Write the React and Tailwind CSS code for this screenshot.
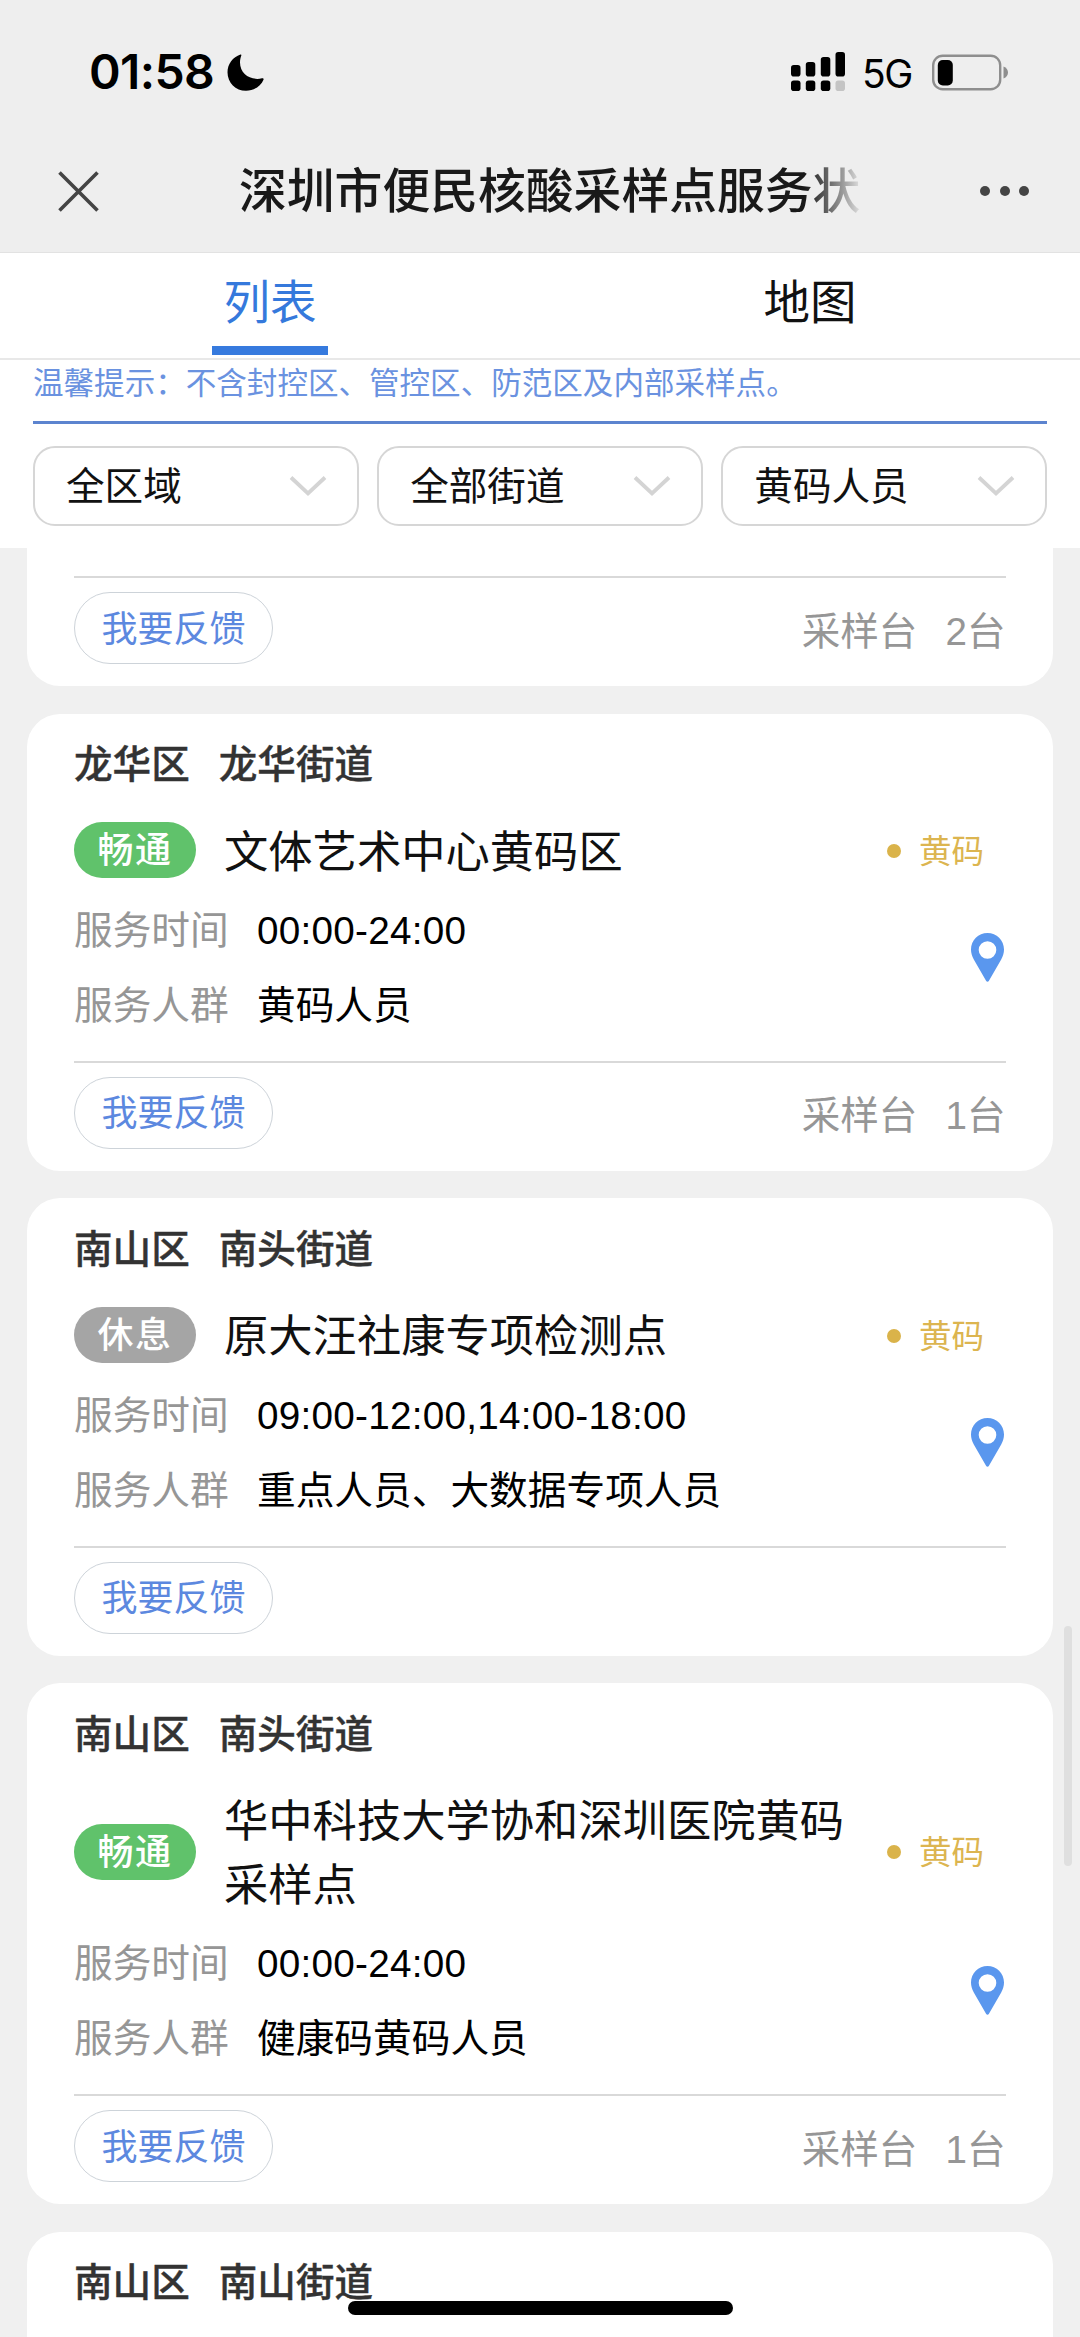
import React from "react";

const stations = [
  {
    district: "龙华区",
    street: "龙华街道",
    status: "畅通",
    open: true,
    lines: ["文体艺术中心黄码区"],
    time: "00:00-24:00",
    people: "黄码人员",
    desks: "1",
  },
  {
    district: "南山区",
    street: "南头街道",
    status: "休息",
    open: false,
    lines: ["原大汪社康专项检测点"],
    time: "09:00-12:00,14:00-18:00",
    people: "重点人员、大数据专项人员",
    desks: null,
  },
  {
    district: "南山区",
    street: "南头街道",
    status: "畅通",
    open: true,
    lines: ["华中科技大学协和深圳医院黄码", "采样点"],
    time: "00:00-24:00",
    people: "健康码黄码人员",
    desks: "1",
  },
];

function StatusBar() {
  return (
    <div className="flex h-[144px] items-center pl-[89px] pr-[71px] font-['Inter','Noto_Sans_CJK_SC',sans-serif] text-black">
      <span className="w-[138px] text-[48px] leading-none font-semibold tracking-[-0.600px]">01:58</span>
      <svg className="h-[37px] w-[37px]" viewBox="0 0 37 37">
        <path d="M13.5 0.5C5.8 3 0.5 10 0.5 18.2C0.5 28.5 8.6 36.8 19 36.8C27 36.8 33.800 32 36.500 25.700C36.900 24.500 36 24 35 24.300C24 27 13 20 13 8.500C13 5.800 13.600 3.500 14.300 1.500C14.600 0.700 14.200 0.300 13.500 0.500Z" fill="#000" />
      </svg>
      <svg className="ml-auto h-[40px] w-[55px]" viewBox="0 0 55 40">
        <g fill="#000">
          <rect x="0" y="13" width="9.500" height="11.500" rx="2.800" />
          <rect x="14.800" y="10" width="9.500" height="14.500" rx="2.800" />
          <rect x="29.800" y="5" width="9.500" height="19.500" rx="2.800" />
          <rect x="44.500" y="0" width="9.500" height="24.500" rx="2.800" />
          <rect x="0" y="28.500" width="9.500" height="10.500" rx="2.800" />
          <rect x="14.800" y="28.500" width="9.500" height="10.500" rx="2.800" />
          <rect x="29.800" y="28.500" width="9.500" height="10.500" rx="2.800" />
        </g>
        <rect x="44.500" y="28.500" width="9.500" height="10.500" rx="2.800" fill="#c4c4c4" />
      </svg>
      <span className="ml-[16px] w-[70px] pt-[2px] text-[39px] leading-none tracking-[-1.500px]">5G</span>
      <svg className="h-[37px] w-[77px]" viewBox="0 0 77 37">
        <rect x="1.200" y="1.700" width="67" height="33.600" rx="9.500" fill="none" stroke="#8e8e8e" strokeWidth="2.400" />
        <rect x="5.800" y="6" width="15" height="25.500" rx="5" fill="#000" />
        <path d="M71.500 12.500C74.500 13.500 76 16 76 18.500C76 21 74.500 23.500 71.500 24.500Z" fill="#8e8e8e" />
      </svg>
    </div>
  );
}

function TitleBar() {
  return (
    <div className="flex h-[109px] items-center border-b border-[#e2e2e2] pl-[58px] pr-[51px] pb-[14px]">
      <svg className="h-[41px] w-[41px]" viewBox="0 0 41 41">
        <path d="M1.500 1.500L39.500 39.500M39.500 1.500L1.500 39.500" stroke="#444" strokeWidth="3.600" />
      </svg>
      <h1 className="ml-[140px] bg-linear-to-r from-[#191919] from-91% to-[#dedede] to-100% bg-clip-text pt-[2px] text-[47.800px] leading-[62px] font-medium whitespace-nowrap text-transparent">
        深圳市便民核酸采样点服务状
      </h1>
      <div className="ml-auto flex gap-[9.500px]">
        <i className="size-[10px] rounded-full bg-[#444]" />
        <i className="size-[10px] rounded-full bg-[#444]" />
        <i className="size-[10px] rounded-full bg-[#444]" />
      </div>
    </div>
  );
}

function Tabs() {
  return (
    <div className="grid h-[107px] grid-cols-2 border-b-2 border-[#e8e8e8] bg-white text-[46.500px] leading-[60px]">
      <div className="flex flex-col items-center pt-[20px] text-[#3579dc]">
        <span>列表</span>
        <i className="mt-[13px] h-[9px] w-[116px] bg-[#367ade]" />
      </div>
      <div className="flex flex-col items-center pt-[20px] text-[#111]">地图</div>
    </div>
  );
}

function Select({ label }) {
  return (
    <div className="flex h-[80px] items-center justify-between rounded-[22px] border-2 border-[#d6d6d6] pl-[31px] pr-[30px] text-[38.600px] text-[#111]">
      <span className="pt-[2px] leading-[50px]">{label}</span>
      <svg className="h-[22px] w-[38px]" viewBox="0 0 38 22">
        <path d="M2 2.500L19 18.500L36 2.500" fill="none" stroke="#d4d4d4" strokeWidth="3.800" />
      </svg>
    </div>
  );
}

function Footer({ desks }) {
  return (
    <div className="border-t-[2px] border-[#d9d9d9]">
      <div className="mt-[14px] flex h-[72px] items-center justify-between">
        <div className="flex h-[72px] w-[199px] items-center justify-center rounded-full border border-[#cdd3d9] pt-[3px] text-[36px] leading-[48px] text-[#5c88df]">
          我要反馈
        </div>
        {desks && (
          <div className="flex pt-[7px] text-[38.600px] leading-[50px] text-[#969696]">
            <span>采样台</span>
            <span className="ml-[28px]">{desks}台</span>
          </div>
        )}
      </div>
    </div>
  );
}

function PlaceHeading({ district, street }) {
  return (
    <div className="flex h-[100px] items-center gap-[29px] pt-[3px] text-[38.600px] leading-[50px] font-medium text-[#333] [-webkit-text-stroke:0.400px_#333]">
      <span>{district}</span>
      <span>{street}</span>
    </div>
  );
}

function Pin() {
  return (
    <svg className="mr-[2px] mb-[21px] h-[49px] w-[33px]" viewBox="0 0 33 49">
      <path fillRule="evenodd" d="M16.500 0C7.400 0 0 7.400 0 16.500C0 19.800 1 23 2.800 26.500L15.200 48C15.800 49 17.200 49 17.800 48L30.200 26.500C32 23 33 19.800 33 16.500C33 7.400 25.600 0 16.500 0ZM16.500 8.200A8.800 8.800 0 1 1 16.500 25.800A8.800 8.800 0 1 1 16.500 8.200Z" fill="#5a97ee" />
    </svg>
  );
}

function Card({ s }) {
  return (
    <section className="mb-[27.500px] rounded-[33px] bg-white pr-[47.500px] pb-[22.300px] pl-[47px]">
      <PlaceHeading district={s.district} street={s.street} />
      <div className="mt-[5px] flex items-center">
        <span
          className={
            "flex h-[56px] w-[122px] items-center justify-center rounded-full pt-[2px] text-[36px] leading-[48px] font-medium tracking-[1.500px] text-white " +
            (s.open ? "bg-[#60c26b]" : "bg-[#a5a5a5]")
          }
        >
          {s.status}
        </span>
        <div className="relative top-[2px] ml-[28px] w-[663px] text-[44.300px] leading-[63.500px] text-[#111]">
          {s.lines.map((l) => (
            <div key={l}>{l}</div>
          ))}
        </div>
        <i className="mt-px size-[14px] rounded-full bg-[#dab34a]" />
        <span className="ml-[18px] pt-[3px] text-[32.500px] leading-[44px] text-[#dcb550]">黄码</span>
      </div>
      <div className="mt-[10.700px] flex items-center justify-between">
        <div className="grid grid-cols-[183px_auto] text-[38.700px] leading-[75px] text-black">
          <span className="text-[#969696]">服务时间</span>
          <span className="tracking-[0.250px]">{s.time}</span>
          <span className="text-[#969696]">服务人群</span>
          <span>{s.people}</span>
        </div>
        <Pin />
      </div>
      <div className="mt-[18px]">
        <Footer desks={s.desks} />
      </div>
    </section>
  );
}

export default function App() {
  return (
    <main className="relative h-[2337px] w-[1080px] overflow-hidden bg-[#f0f0f0] font-['Liberation_Sans','Noto_Sans_CJK_SC',sans-serif]">
      <header className="bg-[#eee]">
        <StatusBar />
        <TitleBar />
      </header>
      <Tabs />
      <div className="h-[188px] bg-white px-[33px]">
        <p className="h-[64px] border-b-[3px] border-[#5c84cf] pt-[1px] text-[30.550px] leading-[44px] whitespace-nowrap text-[#6a92e0]">
          温馨提示：不含封控区、管控区、防范区及内部采样点。
        </p>
        <div className="mt-[22px] grid grid-cols-3 gap-[18.500px]">
          <Select label="全区域" />
          <Select label="全部街道" />
          <Select label="黄码人员" />
        </div>
      </div>
      <div className="px-[27px]">
        <section className="mb-[27.500px] rounded-b-[33px] bg-white pt-[28px] pr-[47.500px] pb-[22px] pl-[47px]">
          <Footer desks="2" />
        </section>
        {stations.map((s, i) => (
          <Card key={i} s={s} />
        ))}
        <section className="h-[200px] rounded-t-[33px] bg-white px-[47px]">
          <PlaceHeading district="南山区" street="南山街道" />
        </section>
      </div>
      <div className="absolute top-[1626px] right-[8px] h-[240px] w-[8px] rounded-full bg-[#dfdfdf]" />
      <div className="absolute top-[2301px] left-[348px] h-[14px] w-[385px] rounded-full bg-black" />
    </main>
  );
}
